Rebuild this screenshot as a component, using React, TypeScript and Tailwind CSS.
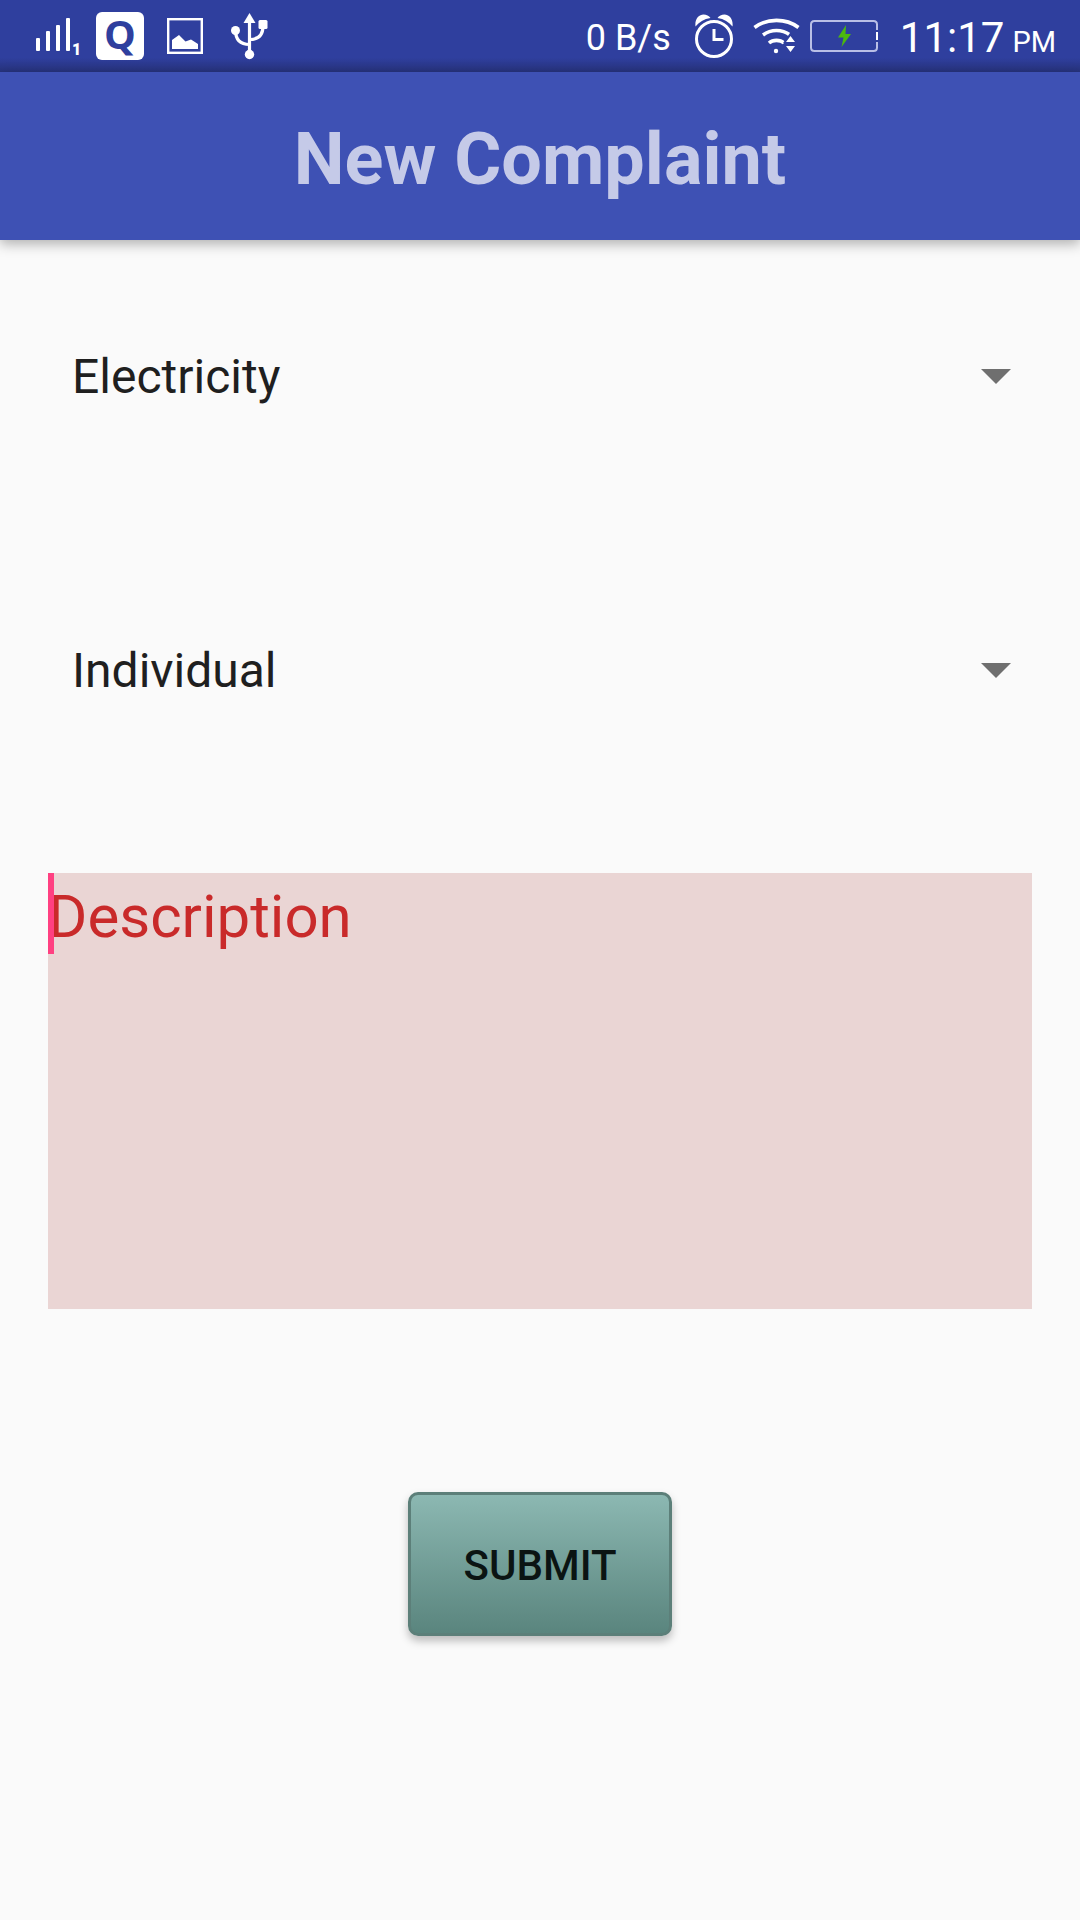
import { useState } from "react";

function SignalIcon() {
  return (
    <svg width="36" height="36" viewBox="0 0 36 36" fill="#fff" aria-hidden="true">
      <rect x="0" y="20" width="4" height="13" rx="1" />
      <rect x="10" y="13" width="4" height="20" rx="1" />
      <rect x="20" y="7" width="4" height="26" rx="1" />
      <rect x="30" y="0" width="4" height="33" rx="1" />
    </svg>
  );
}

function PictureIcon() {
  return (
    <svg width="36" height="36" viewBox="0 0 36 36" aria-hidden="true">
      <rect x="1.2" y="1.2" width="33.6" height="33.6" fill="none" stroke="#fff" strokeWidth="2.4" />
      <path d="M5 31V22L12 17L18.5 23.5L24 21.5L31 26V31Z" fill="#fff" />
    </svg>
  );
}

function UsbIcon() {
  return (
    <svg width="38" height="47" viewBox="0 0 38 47" aria-hidden="true">
      <g fill="none" stroke="#fff" strokeWidth="3.2">
        <path d="M18.5 8V42" />
        <path d="M4.5 17C4.5 26 9 31.5 18.5 31.5" />
        <path d="M32 13C32 22 28 26.5 18.5 26.5" />
      </g>
      <g fill="#fff">
        <path d="M18.5 0L24.5 10H12.5Z" />
        <circle cx="4.5" cy="17.5" r="4.5" />
        <rect x="27.5" y="7" width="9" height="9" rx="1.5" />
        <circle cx="18.5" cy="41.5" r="4.7" />
      </g>
    </svg>
  );
}

function AlarmIcon() {
  return (
    <svg width="38" height="44" viewBox="0 0 38 44" aria-hidden="true">
      <circle cx="19" cy="25" r="17.5" fill="none" stroke="#fff" strokeWidth="3" />
      <path d="M19 15V25.5H28.5" fill="none" stroke="#fff" strokeWidth="3" />
      <path d="M0.5 12.5C-0.5 5 4 0.5 8.5 0.5C11.5 0.5 14 2 15.5 4C9 5 4 8 0.5 12.5Z" fill="#fff" />
      <path d="M37.5 12.5C38.5 5 34 0.5 29.5 0.5C26.5 0.5 24 2 22.5 4C29 5 34 8 37.5 12.5Z" fill="#fff" />
    </svg>
  );
}

function WifiIcon() {
  return (
    <svg width="47" height="36" viewBox="0 0 47 36" aria-hidden="true">
      <g fill="none" stroke="#fff" strokeWidth="3.6">
        <path d="M1.5 9.5C14 0 33 0 45.5 9.5" />
        <path d="M10 17C18 11 29 11 37 17" />
        <path d="M16 25C20 21.5 27 21.5 31 25" />
      </g>
      <circle cx="23" cy="33" r="2.2" fill="#fff" />
      <path d="M37.500 16L43 24H32Z" fill="#2f3f9e" stroke="#2f3f9e" strokeWidth="2" />
      <path d="M37.500 18L42 24H33ZM33 28H42L37.500 34Z" fill="#fff" />
    </svg>
  );
}

function BatteryIcon() {
  return (
    <svg width="68" height="32" viewBox="0 0 68 32" aria-hidden="true">
      <path
        d="M67 10V4.5Q67 1 63.5 1H4.5Q1 1 1 4.5V27.5Q1 31 4.5 31H63.5Q67 31 67 27.5V22"
        fill="none"
        stroke="#b9bfe6"
        strokeWidth="2"
      />
      <path d="M67 12V20" stroke="#fff" strokeWidth="2" />
      <path d="M36 5L28 17.5H33.5L31.5 27L41 14H35.5Z" fill="#4cb80f" />
    </svg>
  );
}

function StatusBar() {
  return (
    <div className="flex h-[72px] items-center justify-between bg-linear-to-b from-[#2f3f9e] from-80% to-[#27337d] pr-6 pl-9 text-white">
      <div className="flex items-center">
        <SignalIcon />
        <span className="mt-7 w-2 text-base leading-none font-black">1</span>
        <span className="ml-4 flex size-12 items-center justify-center rounded-md bg-white pb-1 font-['Open_Sans',sans-serif] text-[40px] leading-none font-bold text-[#2f3f9e]">
          Q
        </span>
        <span className="ml-[23px]">
          <PictureIcon />
        </span>
        <span className="ml-7">
          <UsbIcon />
        </span>
      </div>
      <div className="flex items-center">
        <span className="mt-1 text-4xl leading-10">0 B/s</span>
        <span className="ml-6">
          <AlarmIcon />
        </span>
        <span className="ml-5">
          <WifiIcon />
        </span>
        <span className="ml-[10px]">
          <BatteryIcon />
        </span>
        <span className="ml-[22px] flex items-baseline gap-2 pt-2 leading-10">
          <span className="text-[42px]">11:17</span>
          <span className="text-[29px]">PM</span>
        </span>
      </div>
    </div>
  );
}

function Spinner({ label, options }: { label: string; options: string[] }) {
  return (
    <div className="relative">
      <select
        aria-label={label}
        className="block h-[72px] w-full appearance-none bg-transparent px-6 text-5xl leading-[72px] text-[#1f1f1f] outline-none"
      >
        {options.map((o) => (
          <option key={o}>{o}</option>
        ))}
      </select>
      <svg
        className="pointer-events-none absolute top-7 right-5"
        width="32"
        height="16"
        viewBox="0 0 32 16"
        aria-hidden="true"
      >
        <path d="M1 0H31L16 15Z" fill="#6f6f6f" />
      </svg>
    </div>
  );
}

export default function App() {
  const [text, setText] = useState("");
  return (
    <div className="flex min-h-screen flex-col bg-[#fafafa] font-[Roboto,sans-serif]">
      <StatusBar />
      <header className="flex h-[168px] items-center justify-center bg-[#3e51b4] pt-2 shadow-[0_4px_12px_rgba(0,0,0,0.3)]">
        <h1 className="text-7xl font-bold text-[#c5cae8]">New Complaint</h1>
      </header>
      <form className="flex flex-col px-12 pt-[101px]" onSubmit={(e) => e.preventDefault()}>
        <Spinner label="Category" options={["Electricity", "Water", "Roads"]} />
        <div className="mt-[222px]">
          <Spinner label="Complaint type" options={["Individual", "Community"]} />
        </div>
        <div className="relative mt-[166px]">
          <textarea
            aria-label="Description"
            placeholder="Description"
            value={text}
            onChange={(e) => setText(e.target.value)}
            className="block h-[436px] w-full resize-none bg-[#ead5d4] pt-[9px] text-6xl leading-[70px] text-[#c92a2a] outline-none placeholder:text-[#c92a2a] placeholder:opacity-100"
          />
          {text === "" && <span className="pointer-events-none absolute top-0 left-0 h-[81px] w-1.5 bg-[#ff4081]" />}
        </div>
        <button
          type="submit"
          className="mt-[183px] h-36 w-[264px] self-center rounded-[10px] border-3 border-[#5c7f79] bg-linear-to-b from-[#8cb8b2] to-[#5a857e] pt-0.5 text-[42px] font-medium text-[#0b1413] shadow-[0_5px_8px_rgba(0,0,0,0.25)]"
        >
          SUBMIT
        </button>
      </form>
    </div>
  );
}
